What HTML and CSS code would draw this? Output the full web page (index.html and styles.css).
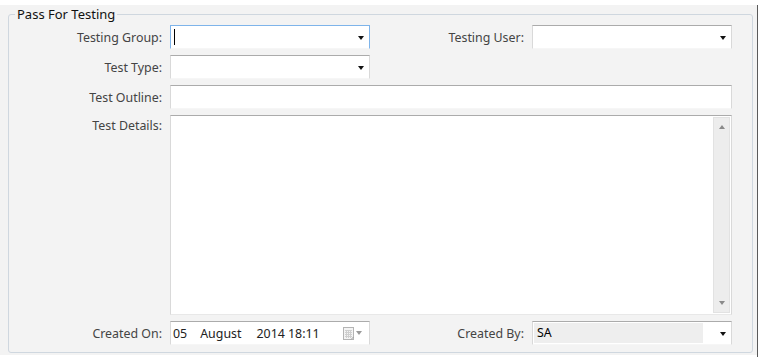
FILE: index.html
```html
<!DOCTYPE html>
<html lang="en">
<head>
    <meta charset="UTF-8">
    <meta name="viewport" content="width=device-width, initial-scale=1.0">
    <title>Pass For Testing</title>
    <link rel="stylesheet" href="styles.css">
</head>
<body>
    <div class="window">
        <div class="panel">
            <fieldset class="group">
                <legend>Pass For Testing</legend>
                <div class="form-grid">
                    <label class="field-label">Testing Group:</label>
                    <div class="combo focused"><span class="caret"></span><span class="arrow"></span></div>
                    <label class="field-label">Testing User:</label>
                    <div class="combo"><span class="arrow"></span></div>

                    <label class="field-label">Test Type:</label>
                    <div class="combo"><span class="arrow"></span></div>
                    <div class="blank"></div>
                    <div class="blank"></div>

                    <label class="field-label">Test Outline:</label>
                    <div class="text-field wide"></div>

                    <label class="field-label top">Test Details:</label>
                    <div class="text-area wide">
                        <div class="area-body"></div>
                        <div class="scrollbar">
                            <span class="scroll-up"></span>
                            <span class="scroll-down"></span>
                        </div>
                    </div>

                    <label class="field-label">Created On:</label>
                    <div class="date-field">
                        <span class="day">05</span>
                        <span class="month">August</span>
                        <span class="year">2014 18:11</span>
                        <span class="date-trigger">
                            <svg width="11" height="13" viewBox="0 0 11 13">
                                <rect x="0.5" y="0.5" width="10" height="12" fill="#f4f4f4" stroke="#b4b4b4"/>
                                <path d="M2 3.5h7M2 5.5h7M2 7.5h7M2 9.5h7M3.5 3v8M5.5 3v8M7.5 3v8" stroke="#cfcfcf" stroke-width="1"/>
                                <path d="M8 12.5l2.5-2.5" stroke="#9a9a9a"/>
                            </svg>
                            <span class="arrow light"></span>
                        </span>
                    </div>
                    <label class="field-label">Created By:</label>
                    <div class="combo readonly"><span class="value">SA</span><span class="arrow"></span></div>
                </div>
            </fieldset>
        </div>
    </div>
</body>
</html>
```
FILE: styles.css
```css
body {
    margin: 0;
    background: #ffffff;
    font-family: "Noto Sans", "Open Sans", sans-serif;
    font-size: 12.4px;
    color: #333;
}

.window {
    width: 757px;
    height: 357px;
    border-right: 1px solid #5a5a5a;
}

.panel {
    margin-top: 5px;
    height: 350px;
    padding: 0 3px 0 8px;
    background: #f3f3f3;
}

.group {
    margin: 0;
    padding: 2px 20px 7px 0;
    width: 723px;
    border: 1px solid #cfd7df;
    border-radius: 3px;
}

.group legend {
    margin-left: 6px;
    padding: 0 2px;
    font-size: 13px;
    line-height: 18px;
    color: #111;
}

.form-grid {
    display: grid;
    grid-template-columns: 153px 200px 146px 200px;
    grid-template-rows: 24px 24px 24px 200px 24px;
    gap: 6px 8px;
}

.field-label {
    align-self: center;
    text-align: right;
    color: #444;
    white-space: nowrap;
}

.field-label.top {
    align-self: start;
    padding-top: 2px;
}

.wide {
    grid-column: 2 / 5;
}

.combo, .text-field, .date-field {
    box-sizing: border-box;
    height: 24px;
    background: #fff;
    border: 1px solid #d9d9d9;
    border-top-color: #ababab;
    border-bottom-color: #f6f6f6;
    display: flex;
    align-items: center;
}

.combo {
    justify-content: flex-end;
}

.combo.focused {
    border-color: #7eb4ea;
    border-bottom-color: #f6f6f6;
    justify-content: space-between;
}

.caret {
    width: 1px;
    height: 16px;
    margin-left: 3px;
    background: #000;
}

.arrow {
    width: 0;
    height: 0;
    margin-right: 5px;
    margin-top: 2px;
    border-left: 3.5px solid transparent;
    border-right: 3.5px solid transparent;
    border-top: 4px solid #111;
}

.arrow.light {
    margin-right: 1px;
    margin-top: 0;
    border-top-color: #9a9a9a;
}

.combo.readonly {
    justify-content: space-between;
    padding: 0 0 0 1px;
}

.combo.readonly .value {
    flex: 1;
    height: 20px;
    line-height: 20px;
    margin-right: 17px;
    padding-left: 3px;
    background: #eeeeee;
    color: #000;
}

.text-area {
    box-sizing: border-box;
    background: #fff;
    border: 1px solid #d9d9d9;
    border-top-color: #ababab;
    border-bottom-color: #e8e8e8;
    display: flex;
    padding: 1px 1px 1px 0;
}

.area-body {
    flex: 1;
}

.scrollbar {
    box-sizing: border-box;
    width: 17px;
    background: #ededed;
    border: 1px solid #e2e2e2;
    display: flex;
    flex-direction: column;
    justify-content: space-between;
    align-items: center;
    padding: 7px 0 7px;
}

.scroll-up, .scroll-down {
    width: 0;
    height: 0;
    border-left: 3.5px solid transparent;
    border-right: 3.5px solid transparent;
}

.scroll-up {
    border-bottom: 4px solid #8a8a8a;
}

.scroll-down {
    border-top: 4px solid #8a8a8a;
}

.date-field {
    padding-left: 2px;
    color: #222;
}

.date-field .month {
    margin-left: 13px;
}

.date-field .year {
    margin-left: 15px;
}

.date-trigger {
    margin-left: auto;
    margin-right: 6px;
    display: flex;
    align-items: center;
    gap: 2px;
}

.date-trigger svg {
    display: block;
}
```
